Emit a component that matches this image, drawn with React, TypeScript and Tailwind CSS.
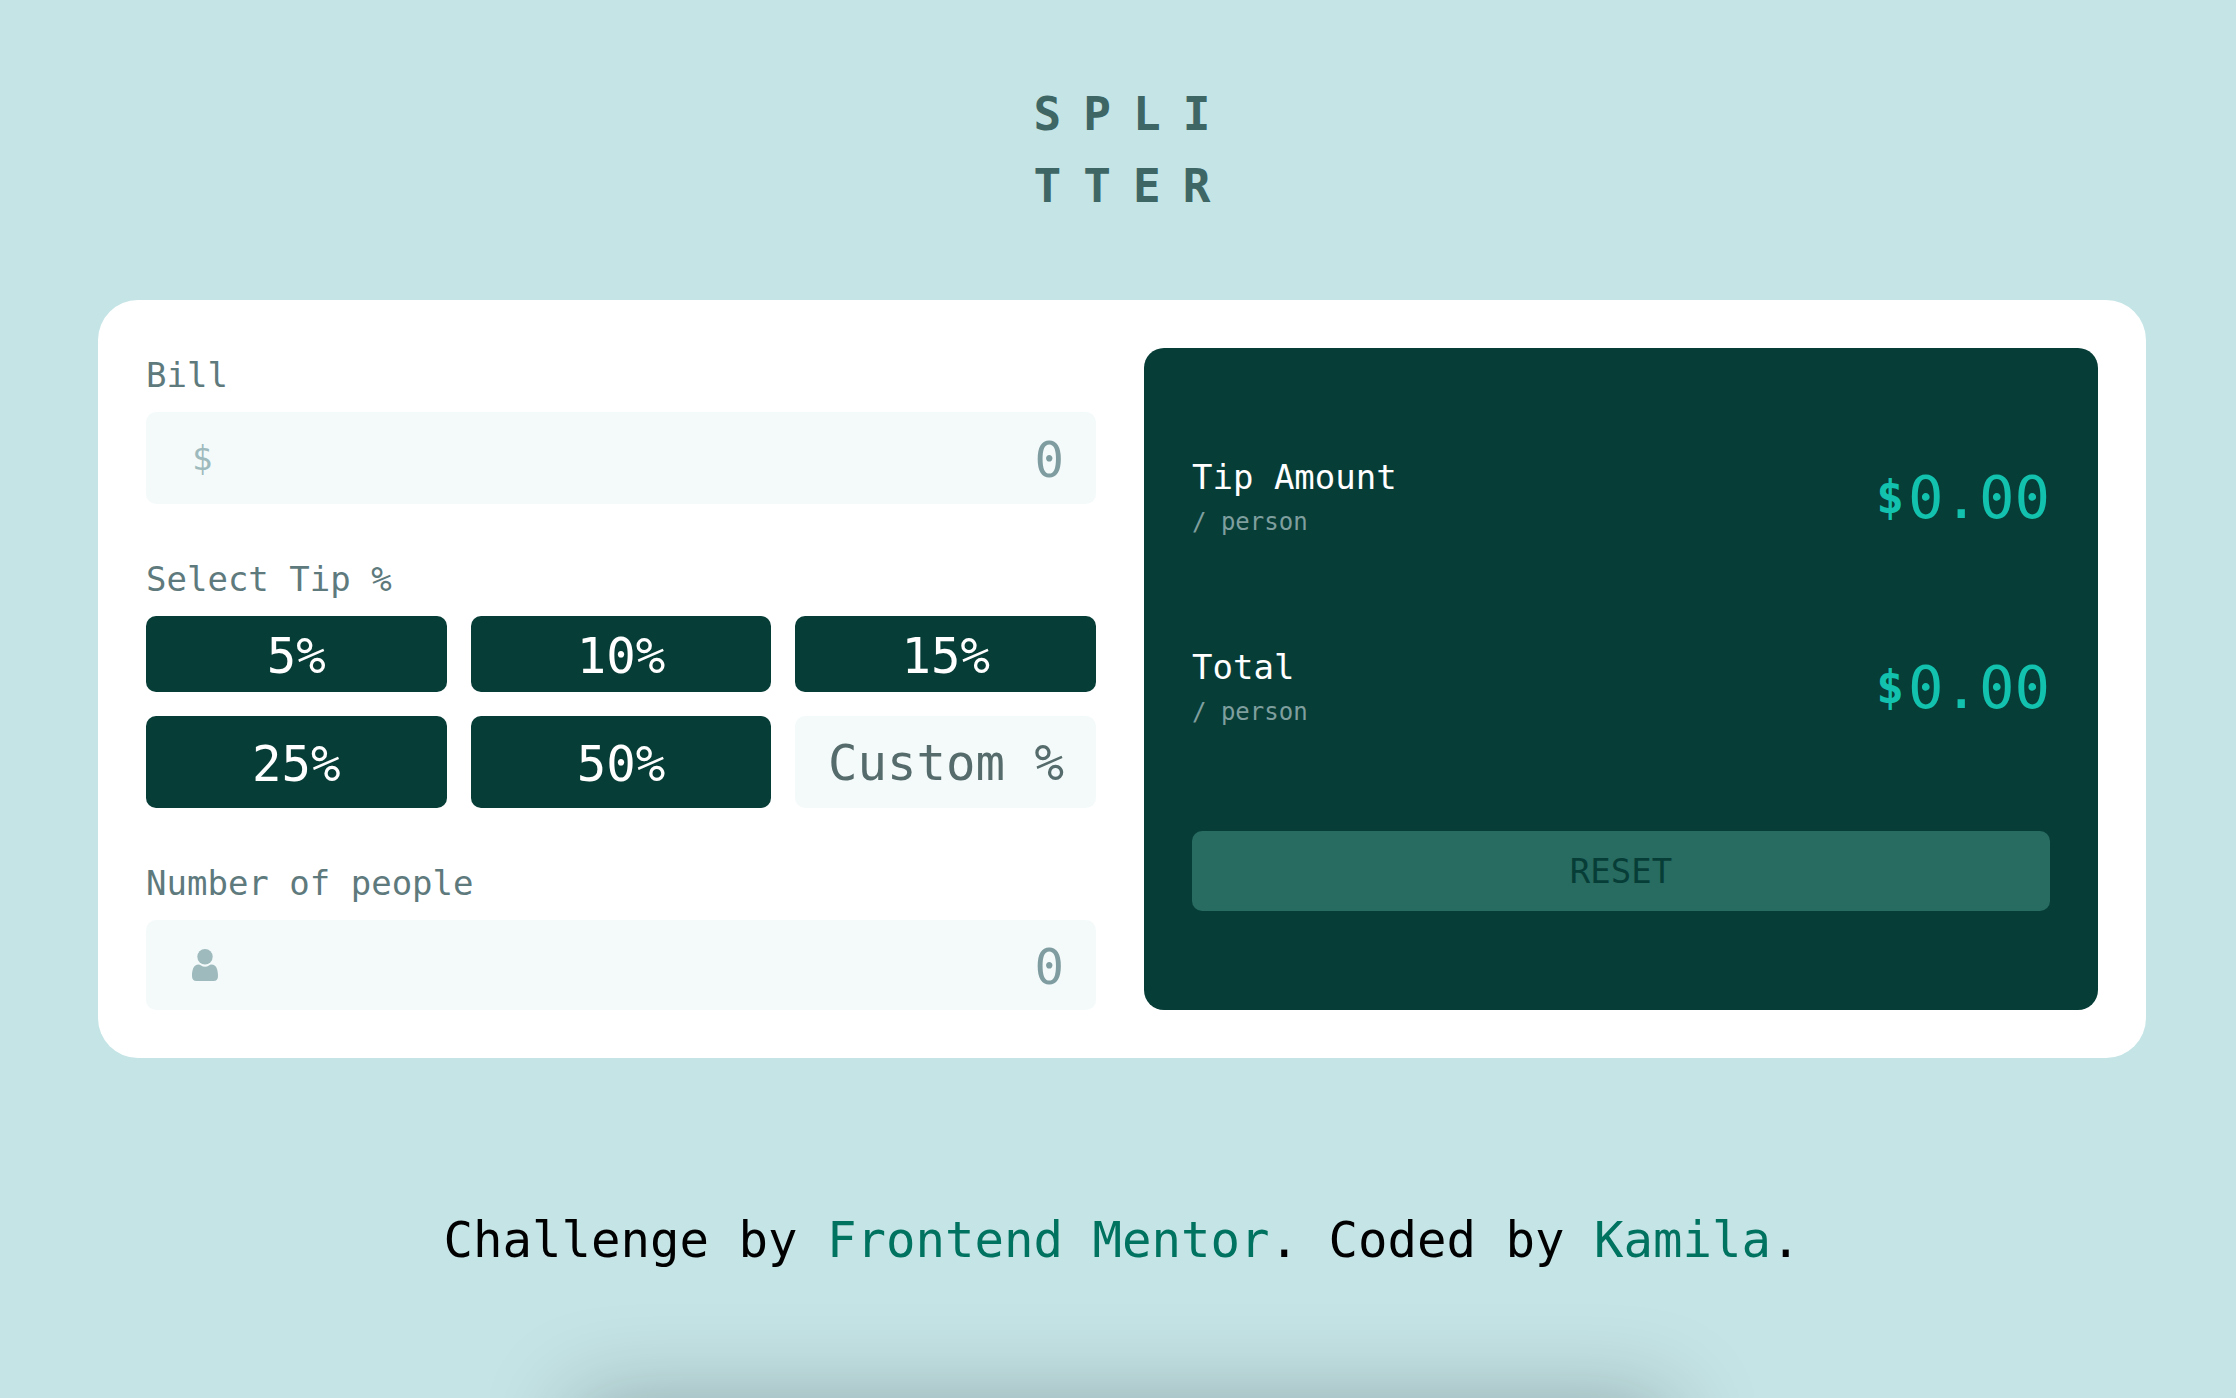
import { useState, type ReactNode } from "react";

const field =
  "w-full rounded-[10px] bg-[#f4fafa] pt-1 pr-8 text-right text-[49px] text-[#073d37] outline-none";
const label = "mb-[10px] block text-[34px] leading-[54px] text-[#5e7a7d]";

function PersonIcon() {
  return (
    <svg viewBox="0 0 26 32" className="h-8 w-[26px]" fill="currentColor" aria-hidden="true">
      <circle cx="13" cy="7.7" r="7.7" />
      <path d="M6.5 15.5C7.5 15.5 8.3 15.9 9 16.5C11.5 18.3 14.5 18.3 17 16.5C17.7 15.9 18.5 15.5 19.5 15.5C24.5 15.5 26 21 26 27C26 30.5 24.5 32 21.5 32H4.5C1.5 32 0 30.5 0 27C0 21 1.5 15.5 6.5 15.5Z" />
    </svg>
  );
}

type NumberFieldProps = {
  id: string;
  text: string;
  icon: ReactNode;
  size: string;
  value: string;
  onChange: (value: string) => void;
};

function NumberField({ id, text, icon, size, value, onChange }: NumberFieldProps) {
  return (
    <div>
      <label htmlFor={id} className={label}>
        {text}
      </label>
      <div className="relative">
        <span className="pointer-events-none absolute inset-y-0 left-[46px] flex items-center text-[34px] text-[#9ebabd]">
          {icon}
        </span>
        <input
          id={id}
          inputMode="decimal"
          placeholder="0"
          value={value}
          onChange={(e) => onChange(e.target.value)}
          className={`${field} ${size} pl-24 placeholder:text-[#7f9ca0]`}
        />
      </div>
    </div>
  );
}

function Result({ title, amount }: { title: string; amount: number }) {
  return (
    <div className="flex h-[92px] items-center justify-between">
      <div>
        <h2 className="text-[34px] leading-[50px] text-white">{title}</h2>
        <p className="text-2xl leading-10 text-[#7f9f9f]">/ person</p>
      </div>
      <p className="flex items-center gap-1 leading-none text-[#13c2ae]">
        <span className="text-[46px] font-bold">$</span>
        <span className="text-[59px]">{amount.toFixed(2)}</span>
      </p>
    </div>
  );
}

const tips = [5, 10, 15, 25, 50];

export default function App() {
  const [bill, setBill] = useState("");
  const [people, setPeople] = useState("");
  const [custom, setCustom] = useState("");
  const [tip, setTip] = useState(0);

  const count = Number(people) || 0;
  const total = Number(bill) || 0;
  const rate = (Number(custom) || tip) / 100;
  const tipEach = count > 0 ? (total * rate) / count : 0;
  const totalEach = count > 0 ? (total * (1 + rate)) / count : 0;

  const reset = () => {
    setBill("");
    setPeople("");
    setCustom("");
    setTip(0);
  };

  return (
    <div className="relative min-h-screen overflow-hidden bg-[#c5e4e6] pt-[78px] pr-[90px] pl-[98px] font-['DejaVu_Sans_Mono',monospace]">
      <header className="flex justify-center">
        <h1
          aria-label="Splitter"
          className="grid grid-cols-4 gap-x-[22px] text-center text-[46px] leading-[72px] font-bold text-[#3d6664]"
        >
          {[..."SPLITTER"].map((letter, i) => (
            <span key={i}>{letter}</span>
          ))}
        </h1>
      </header>

      <main className="mt-[78px] grid grid-cols-[475fr_477fr] gap-12 rounded-[40px] bg-white p-12">
        <form className="flex flex-col gap-12" onSubmit={(e) => e.preventDefault()}>
          <NumberField id="bill" text="Bill" icon="$" size="h-[92px]" value={bill} onChange={setBill} />
          <fieldset>
            <legend className={label}>Select Tip %</legend>
            <div className="grid grid-cols-3 grid-rows-[76px_92px] gap-6">
              {tips.map((value) => (
                <button
                  key={value}
                  type="button"
                  onClick={() => setTip(value)}
                  className="rounded-[10px] bg-[#073d37] pt-1 text-[49px] leading-none text-white"
                >
                  {value}%
                </button>
              ))}
              <input
                aria-label="Custom tip percentage"
                placeholder="Custom %"
                value={custom}
                onChange={(e) => setCustom(e.target.value)}
                className={`${field} min-w-0 placeholder:text-[#566b6b]`}
              />
            </div>
          </fieldset>
          <NumberField
            id="people"
            text="Number of people"
            icon={<PersonIcon />}
            size="h-[90px]"
            value={people}
            onChange={setPeople}
          />
        </form>

        <section className="flex flex-col justify-center gap-[98px] rounded-[20px] bg-[#073d37] px-12 pt-1">
          <Result title="Tip Amount" amount={tipEach} />
          <Result title="Total" amount={totalEach} />
          <button
            type="button"
            onClick={reset}
            className="h-20 rounded-[10px] bg-[#276b61] text-[34px] text-[#073d37]"
          >
            RESET
          </button>
        </section>
      </main>

      <footer className="mt-[147px] text-center text-[49px] leading-[72px] text-black">
        Challenge by{" "}
        <a href="#frontend-mentor" className="text-[#007260]">
          Frontend Mentor
        </a>
        . Coded by{" "}
        <a href="#kamila" className="text-[#007260]">
          Kamila
        </a>
        .
      </footer>

      <div
        aria-hidden="true"
        className="absolute top-full right-[90px] left-[98px] mx-auto h-60 w-[1096px] shadow-[0_0_90px_rgba(0,0,0,0.25)]"
      />
    </div>
  );
}
